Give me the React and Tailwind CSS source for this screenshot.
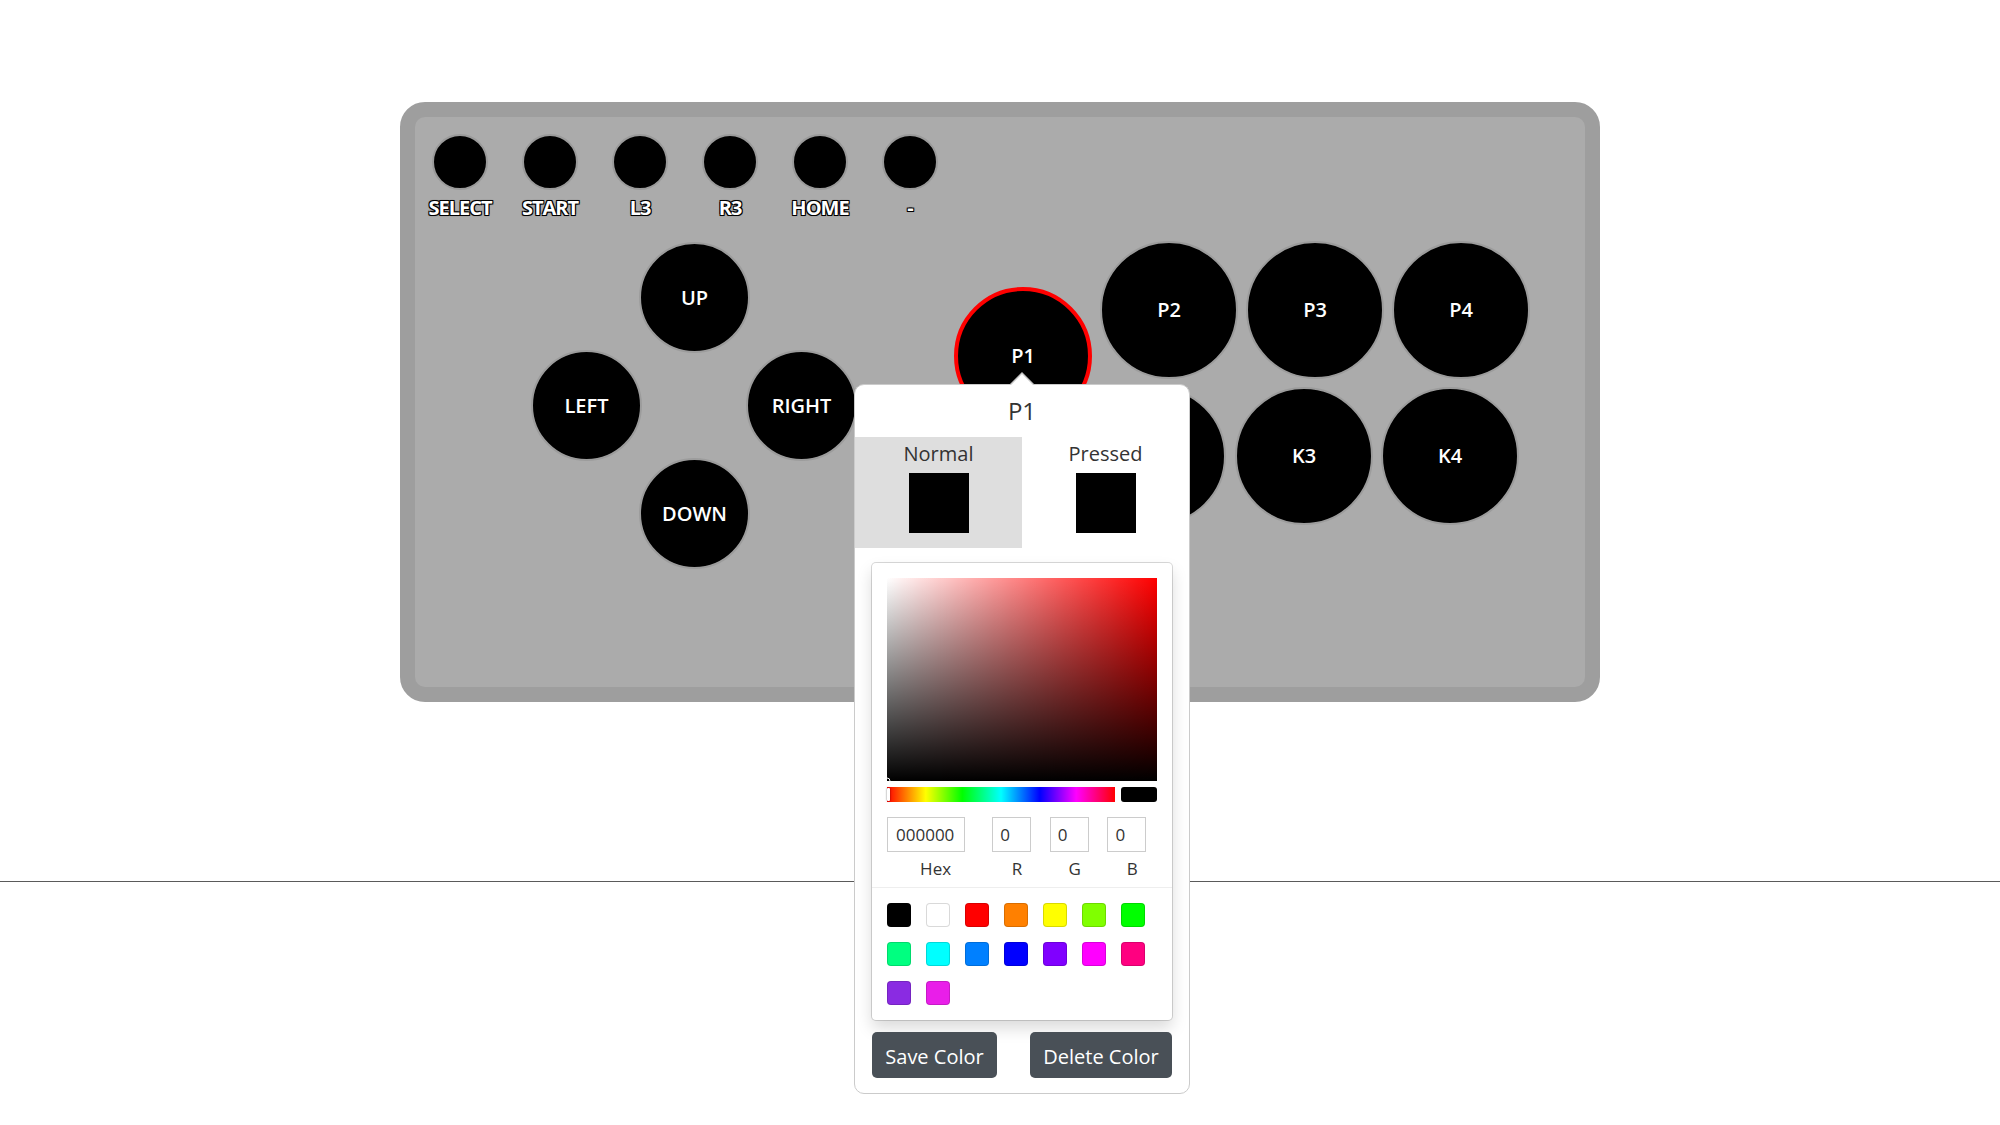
import { useState } from "react";

const topButtons = ["SELECT", "START", "L3", "R3", "HOME", "-"];

// board buttons are laid out like a real stick: place is the content
const bigButtons = [
  { id: "up", label: "UP", pos: "left-[224px] top-[125px]", size: "small" },
  { id: "left", label: "LEFT", pos: "left-[116px] top-[233px]", size: "small" },
  { id: "right", label: "RIGHT", pos: "left-[331px] top-[233px]", size: "small" },
  { id: "down", label: "DOWN", pos: "left-[224px] top-[341px]", size: "small" },
  { id: "k1", label: "K1", pos: "left-[527px] top-[316px]", size: "large" },
  { id: "k2", label: "K2", pos: "left-[673px] top-[270px]", size: "large" },
  { id: "k3", label: "K3", pos: "left-[820px] top-[270px]", size: "large" },
  { id: "k4", label: "K4", pos: "left-[966px] top-[270px]", size: "large" },
  { id: "p1", label: "P1", pos: "left-[539px] top-[170px]", size: "large" },
  { id: "p2", label: "P2", pos: "left-[685px] top-[124px]", size: "large" },
  { id: "p3", label: "P3", pos: "left-[831px] top-[124px]", size: "large" },
  { id: "p4", label: "P4", pos: "left-[977px] top-[124px]", size: "large" },
];

const swatches = [
  "bg-[#000000]",
  "bg-[#ffffff]",
  "bg-[#ff0000]",
  "bg-[#ff8000]",
  "bg-[#ffff00]",
  "bg-[#80ff00]",
  "bg-[#00ff00]",
  "bg-[#00ff80]",
  "bg-[#00ffff]",
  "bg-[#0080ff]",
  "bg-[#0000ff]",
  "bg-[#8000ff]",
  "bg-[#ff00ff]",
  "bg-[#ff0080]",
  "bg-[#8a2be2]",
  "bg-[#e91ee9]",
];

const outline =
  "[text-shadow:-1px_-1px_0_#000,1px_-1px_0_#000,-1px_1px_0_#000,1px_1px_0_#000,0_0_2px_#000]";

function ColorPicker() {
  return (
    <div className="mx-[17px] mt-[15px] rounded-[4px] bg-white px-[15px] pt-[15px] shadow-[0_0_0_1px_rgba(0,0,0,0.15),0_8px_16px_rgba(0,0,0,0.15)]">
      {/* saturation */}
      <div className="relative h-[203px] bg-[#ff0000]">
        <div className="absolute inset-0 bg-[linear-gradient(to_right,#fff,rgba(255,255,255,0))]" />
        <div className="absolute inset-0 bg-[linear-gradient(to_top,#000,rgba(0,0,0,0))]" />
        <div className="absolute bottom-0 left-0 h-[7px] w-[7px] -translate-x-1/2 translate-y-1/2 rounded-full border-[1.5px] border-white" />
      </div>

      {/* hue + preview */}
      <div className="mt-[6px] flex h-[15px] gap-[6px]">
        <div className="relative flex-1 bg-[linear-gradient(to_right,#f00_0%,#ff0_17%,#0f0_33%,#0ff_50%,#00f_67%,#f0f_83%,#f00_100%)]">
          <div className="absolute left-0 top-[1px] h-[13px] w-[3px] rounded-[1px] bg-white shadow-[0_0_2px_rgba(0,0,0,0.6)]" />
        </div>
        <div className="w-[36px] rounded-[3px] bg-black" />
      </div>

      {/* fields */}
      <div className="mt-[15px] flex text-[17px] text-[#333]">
        <div className="w-[98px]">
          <div className="flex h-[35px] w-[78px] items-center border border-[#ccc] pl-[8px]">000000</div>
          <div className="mt-[5px] text-center leading-[23px]">Hex</div>
        </div>
        {["R", "G", "B"].map((c) => (
          <div key={c} className="w-[58px] pl-[8px]">
            <div className="flex h-[35px] w-[39px] items-center border border-[#ccc] pl-[7px]">0</div>
            <div className="mt-[5px] text-center leading-[23px]">{c}</div>
          </div>
        ))}
      </div>

      {/* presets */}
      <div className="-mx-[15px] mt-[7px] flex flex-wrap gap-[15px] border-t border-[#eee] p-[15px]">
        {swatches.map((s, i) => (
          <div
            key={i}
            className={`h-[24px] w-[24px] rounded-[4px] shadow-[inset_0_0_0_1px_rgba(0,0,0,0.15)] ${s}`}
          />
        ))}
      </div>
    </div>
  );
}

function Popover() {
  const [tab, setTab] = useState("normal");

  return (
    <div className="absolute left-[439px] top-[267px] z-10 w-[336px] rounded-[10px] border border-[#cbcbcb] bg-white pb-[15px]">
      {/* arrow */}
      <div className="absolute left-[155px] top-[-13px] h-0 w-0 border-x-[12px] border-b-[12px] border-x-transparent border-b-[#c4c4c4]" />
      <div className="absolute left-[156px] top-[-11px] h-0 w-0 border-x-[11px] border-b-[11px] border-x-transparent border-b-white" />

      <div className="flex h-[52px] items-center justify-center text-[24px] text-[#333]">P1</div>

      <div className="grid grid-cols-2">
        {[
          { id: "normal", label: "Normal" },
          { id: "pressed", label: "Pressed" },
        ].map((t) => (
          <button
            key={t.id}
            onClick={() => setTab(t.id)}
            className={`flex h-[111px] flex-col items-center pt-[3px] text-[20px] leading-[27px] text-[#333] ${
              tab === t.id ? "bg-[#dedede]" : "bg-white"
            }`}
          >
            <span>{t.label}</span>
            <span className="mt-[6px] h-[60px] w-[60px] bg-black" />
          </button>
        ))}
      </div>

      <ColorPicker />

      <div className="mx-[17px] mt-[12px] flex justify-between">
        <button className="h-[46px] w-[125px] rounded-[5px] bg-[#495057] pt-[3px] text-[20px] text-white">Save Color</button>
        <button className="h-[46px] w-[142px] rounded-[5px] bg-[#495057] pt-[3px] text-[20px] text-white">Delete Color</button>
      </div>
    </div>
  );
}

export default function App() {
  return (
    <div className="flex min-h-screen flex-col bg-white font-['Open_Sans',sans-serif]">
      <div className="relative mx-auto mt-[102px] h-[600px] w-[1200px] rounded-[25px] border-[15px] border-[#9e9e9e] bg-[#ababab]">
        {/* aux buttons */}
        <div className="flex pt-[17px]">
          {topButtons.map((b) => (
            <div key={b} className="flex w-[90px] flex-col items-center">
              <div className="h-[56px] w-[56px] rounded-full border-2 border-[#9a9a9a] bg-black" />
              <div className={`mt-[5px] text-[20px] font-bold leading-[26px] tracking-[-1px] text-white ${outline}`}>
                {b}
              </div>
            </div>
          ))}
        </div>

        {bigButtons.map((b) => (
          <div
            key={b.id}
            className={`absolute flex items-center justify-center rounded-full bg-black text-[20px] font-semibold text-white ${b.pos} ${
              b.size === "small" ? "h-[111px] w-[111px]" : "h-[138px] w-[138px]"
            } ${b.id === "p1" ? "border-4 border-[#ff0000]" : "border-2 border-[#9c9c9c]"}`}
          >
            {b.label}
          </div>
        ))}

        <Popover />
      </div>

      <div className="mt-[179px] border-t border-[#5a5a5a]" />
    </div>
  );
}
